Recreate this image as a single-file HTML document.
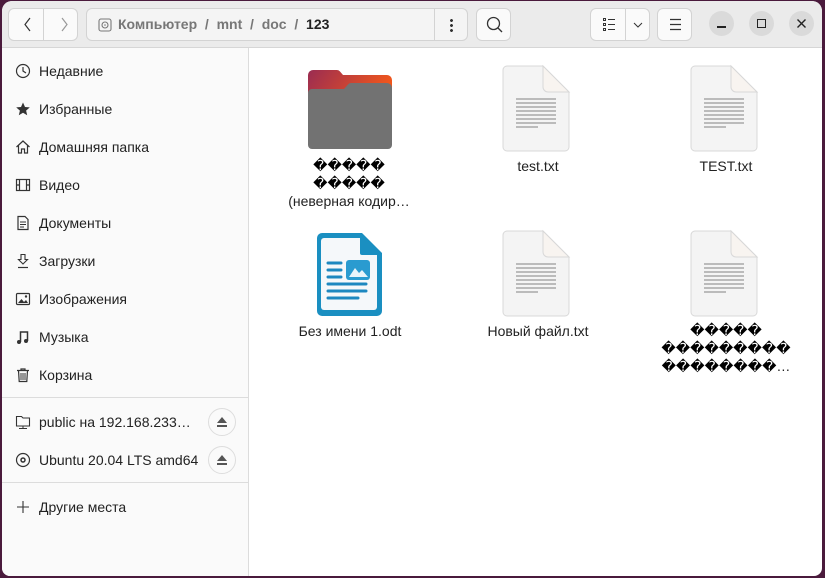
<!DOCTYPE html>
<html><head><meta charset="utf-8"><style>
*{box-sizing:border-box;margin:0;padding:0}
body{width:825px;height:578px;background:#4a1a3c;font-family:"Liberation Sans","DejaVu Sans",sans-serif;position:relative;overflow:hidden}
.win{position:absolute;left:2px;top:1px;width:820px;height:575px;background:#fff;border-radius:10px 10px 8px 8px;overflow:hidden}
.hb{position:absolute;left:0;top:0;width:820px;height:47px;background:#ebebeb;border-bottom:1px solid #d6d6d6}
.btn{position:absolute;top:7px;height:33px;background:#fafafa;border:1px solid #d3d3d3;border-radius:6px}
.side{position:absolute;left:0;top:47px;width:247px;height:528px;background:#fafafa;border-right:1px solid #dcdcdc}
.it{position:absolute;left:0;height:30px;width:247px;font-size:14px;color:#222;line-height:30px}
.it span{position:absolute;left:37px}
.it svg{position:absolute;left:13px;top:7px}
.sep{position:absolute;left:0;width:247px;height:1px;background:#dcdcdc}
.ej{position:absolute;left:206px;top:0;width:28px;height:28px;border:1px solid #ddd;border-radius:50%;background:#fafafa}
.ej:after{content:"";position:absolute;left:8px;top:8px;border-left:5px solid transparent;border-right:5px solid transparent;border-bottom:6px solid #555}
.ej:before{content:"";position:absolute;left:8px;top:16px;width:10px;height:2px;background:#555}
.lbl{position:absolute;text-align:center;font-size:14px;color:#222;line-height:18px;width:180px}
.q{color:#000}
.wc{position:absolute;top:10px;width:25px;height:25px;border-radius:50%;background:#dadada}
</style></head><body>
<div class="win">
<div class="hb">
 <div class="btn" style="left:6px;width:70px"><div style="position:absolute;left:34px;top:0;width:1px;height:31px;background:#d3d3d3"></div>
  <svg width="70" height="31" style="position:absolute;left:0;top:0"><path d="M21 9 L16 15.5 L21 22" stroke="#333" fill="none" stroke-width="1.2"/><path d="M53 9 L58 15.5 L53 22" stroke="#999" fill="none" stroke-width="1.2"/></svg></div>
 <div class="btn" style="left:84px;width:382px;background:#f4f4f4"><div style="position:absolute;left:347px;top:0;width:1px;height:31px;background:#d3d3d3"></div>
  <svg width="14" height="14" style="position:absolute;left:11px;top:9px"><rect x="1" y="1" width="12" height="12" rx="2" fill="none" stroke="#777" stroke-width="1.1"/><circle cx="7" cy="7" r="3" fill="none" stroke="#777" stroke-width="1.1"/><circle cx="7" cy="7" r="0.8" fill="#777"/></svg>
  <div style="position:absolute;left:31px;top:7px;font-size:14px;font-weight:bold;color:#777;white-space:pre">Компьютер  /  mnt  /  doc  /  <span style="color:#222">123</span></div>
  <div style="position:absolute;left:363px;top:9px;width:3px;height:14px;background:radial-gradient(circle,#333 1.3px,transparent 1.6px) 0 0/3px 5px"></div>
 </div>
 <div class="btn" style="left:474px;width:35px"><svg width="35" height="31"><circle cx="16.5" cy="14.5" r="6" fill="none" stroke="#333" stroke-width="1.3"/><path d="M21 19 L25 23" stroke="#333" stroke-width="1.3"/></svg></div>
 <div class="btn" style="left:588px;width:60px"><div style="position:absolute;left:34px;top:0;width:1px;height:31px;background:#d3d3d3"></div>
  <svg width="60" height="31"><g fill="none" stroke="#333" stroke-width="1"><rect x="12.5" y="9.5" width="2" height="2"/><rect x="12.5" y="14.5" width="2" height="2"/><rect x="12.5" y="19.5" width="2" height="2"/><path d="M17 10.5h7M17 15.5h7M17 20.5h7"/><path d="M43 14 L47 18 L51 14"/></g></svg></div>
 <div class="btn" style="left:655px;width:35px"><svg width="35" height="31"><path d="M12 10.5h11M12 15.5h11M12 20.5h11" stroke="#333" stroke-width="1.2"/></svg></div>
 <div class="wc" style="left:707px"><div style="position:absolute;left:8px;top:15px;width:9px;height:1.5px;background:#222"></div></div>
 <div class="wc" style="left:747px"><div style="position:absolute;left:8px;top:8px;width:9px;height:9px;border:1.3px solid #222"></div></div>
 <div class="wc" style="left:787px"><svg width="25" height="25"><path d="M8.5 8.5L16.5 16.5M16.5 8.5L8.5 16.5" stroke="#222" stroke-width="1.4"/></svg></div>
</div>
<div class="side">
 <div class="it" style="top:8px"><svg width="16" height="16"><circle cx="8" cy="8" r="6.5" fill="none" stroke="#333" stroke-width="1.2"/><path d="M8 4v4l3 2" stroke="#333" fill="none" stroke-width="1.2"/></svg><span>Недавние</span></div>
 <div class="it" style="top:46px"><svg width="16" height="16"><path d="M8 1.5l2 4.5 4.8.4-3.7 3.2 1.1 4.7L8 11.8 3.8 14.3l1.1-4.7L1.2 6.4 6 6z" fill="#333"/></svg><span>Избранные</span></div>
 <div class="it" style="top:84px"><svg width="16" height="16"><path d="M1.5 8L8 2l6.5 6M3.5 6.5V14h3v-4h3v4h3V6.5" fill="none" stroke="#333" stroke-width="1.2"/></svg><span>Домашняя папка</span></div>
 <div class="it" style="top:122px"><svg width="16" height="16"><rect x="1.5" y="2.5" width="13" height="11" fill="none" stroke="#333" stroke-width="1.2"/><path d="M4.5 2.5v11M11.5 2.5v11M1.5 8h3M11.5 8h3" stroke="#333" stroke-width="1.2"/></svg><span>Видео</span></div>
 <div class="it" style="top:160px"><svg width="16" height="16"><path d="M3 1.5h7l3 3v10H3z" fill="none" stroke="#333" stroke-width="1.2"/><path d="M5 7h6M5 9.5h6M5 12h4" stroke="#333"/></svg><span>Документы</span></div>
 <div class="it" style="top:198px"><svg width="16" height="16"><path d="M6 1.5h4v5h2.5L8 11 3.5 6.5H6z" fill="none" stroke="#333" stroke-width="1.1"/><path d="M3 14.5h10" stroke="#333" stroke-width="1.2"/></svg><span>Загрузки</span></div>
 <div class="it" style="top:236px"><svg width="16" height="16"><rect x="1.5" y="2.5" width="13" height="11" rx="1" fill="none" stroke="#333" stroke-width="1.2"/><path d="M3 12l3.5-4 2.5 3 2-2 2 3z" fill="#333"/><circle cx="11" cy="5.5" r="1.2" fill="#333"/></svg><span>Изображения</span></div>
 <div class="it" style="top:274px"><svg width="16" height="16"><path d="M5.5 13V3h7v9" fill="none" stroke="#333" stroke-width="1.5"/><circle cx="4" cy="13" r="2" fill="#333"/><circle cx="11" cy="12" r="2" fill="#333"/></svg><span>Музыка</span></div>
 <div class="it" style="top:312px"><svg width="16" height="16"><path d="M2 3.5h12M6 3.5V2h4v1.5M3.5 3.5l.7 11h7.6l.7-11" fill="none" stroke="#333" stroke-width="1.2"/><path d="M6 6v7M8 6v7M10 6v7" stroke="#333"/></svg><span>Корзина</span></div>
 <div class="sep" style="top:349px"></div>
 <div class="it" style="top:359px"><svg width="16" height="16"><path d="M1.5 2.5h5l1.5 1.5h6.5v8h-13z" fill="none" stroke="#333" stroke-width="1.1"/><path d="M8 12.5v2M4 14.5h8" stroke="#333"/></svg><span>public на 192.168.233…</span><div class="ej" style="top:1px"></div></div>
 <div class="it" style="top:397px"><svg width="16" height="16"><circle cx="8" cy="8" r="6.5" fill="none" stroke="#333" stroke-width="1.2"/><circle cx="8" cy="8" r="2" fill="none" stroke="#333" stroke-width="1.5"/></svg><span>Ubuntu 20.04 LTS amd64</span><div class="ej" style="top:1px"></div></div>
 <div class="sep" style="top:434px"></div>
 <div class="it" style="top:444px"><svg width="16" height="16"><path d="M8 2v12M2 8h12" stroke="#333" stroke-width="1.1"/></svg><span>Другие места</span></div>
</div>
<!-- files -->
<svg width="820" height="330" style="position:absolute;left:0;top:55px">
 <defs>
  <linearGradient id="fg" x1="0" y1="0" x2="1" y2="0.3"><stop offset="0" stop-color="#9a2c52"/><stop offset="1" stop-color="#f0561c"/></linearGradient>
  <g id="doc"><path d="M4 10h36l26 26v55a4 4 0 0 1-4 4H4a4 4 0 0 1-4-4V14a4 4 0 0 1 4-4z" fill="#f4f4f4" stroke="#d8d8d8"/><path d="M40 10v21a5 5 0 0 0 5 5h21z" fill="#f8f4f0" stroke="#d8d8d8"/><path d="M13 43h40M13 47h40M13 51h40M13 55h40M13 59h40M13 63h40M13 67h40M13 71h22" stroke="#a8a8a8" stroke-width="1.5"/></g>
 </defs>
 <path d="M306 19a5 5 0 0 1 5-5h24a4 4 0 0 1 3 1.5l3 3.5h44a5 5 0 0 1 5 5v25h-84z" fill="url(#fg)"/>
 <path d="M306 37a4 4 0 0 1 4-4h32l4-4.5a4 4 0 0 1 3-1.5h36a5 5 0 0 1 5 5v57a4 4 0 0 1-4 4h-76a4 4 0 0 1-4-4z" fill="#727272"/>
 <use href="#doc" x="501" y="0"/>
 <use href="#doc" x="689" y="0"/>
 <use href="#doc" x="501" y="165"/>
 <use href="#doc" x="689" y="165"/>
 <g transform="translate(314,175)">
  <path d="M6 2h40l20 20v58a5 5 0 0 1-5 5H6a5 5 0 0 1-5-5V7a5 5 0 0 1 5-5z" fill="#1a8fc1"/>
  <path d="M8 7h36l17 17v52a3 3 0 0 1-3 3H8a3 3 0 0 1-3-3V10a3 3 0 0 1 3-3z" fill="#f5f8fa"/>
  <path d="M44 5v17a2 2 0 0 0 2 2h17z" fill="#1a8fc1"/>
  <path d="M12 32h13M12 39h13M12 46h13M12 53h38M12 60h38M12 67h30" stroke="#1d88c0" stroke-width="3" stroke-linecap="round"/>
  <rect x="30" y="29" width="24" height="20" rx="3" fill="#2a9bd0"/>
  <path d="M33 46l6-9 4 5 3-3 6 7z" fill="#e8f4fa"/>
 </g>
</svg>
<div class="lbl" style="left:257px;top:155px"><span class="q">�����<br>�����</span><br>(неверная кодир…</div>
<div class="lbl" style="left:446px;top:156px">test.txt</div>
<div class="lbl" style="left:634px;top:156px">TEST.txt</div>
<div class="lbl" style="left:258px;top:321px">Без имени 1.odt</div>
<div class="lbl" style="left:446px;top:321px">Новый файл.txt</div>
<div class="lbl" style="left:634px;top:320px"><span class="q">�����<br>���������<br>��������</span>…</div>
</div>
</body></html>
